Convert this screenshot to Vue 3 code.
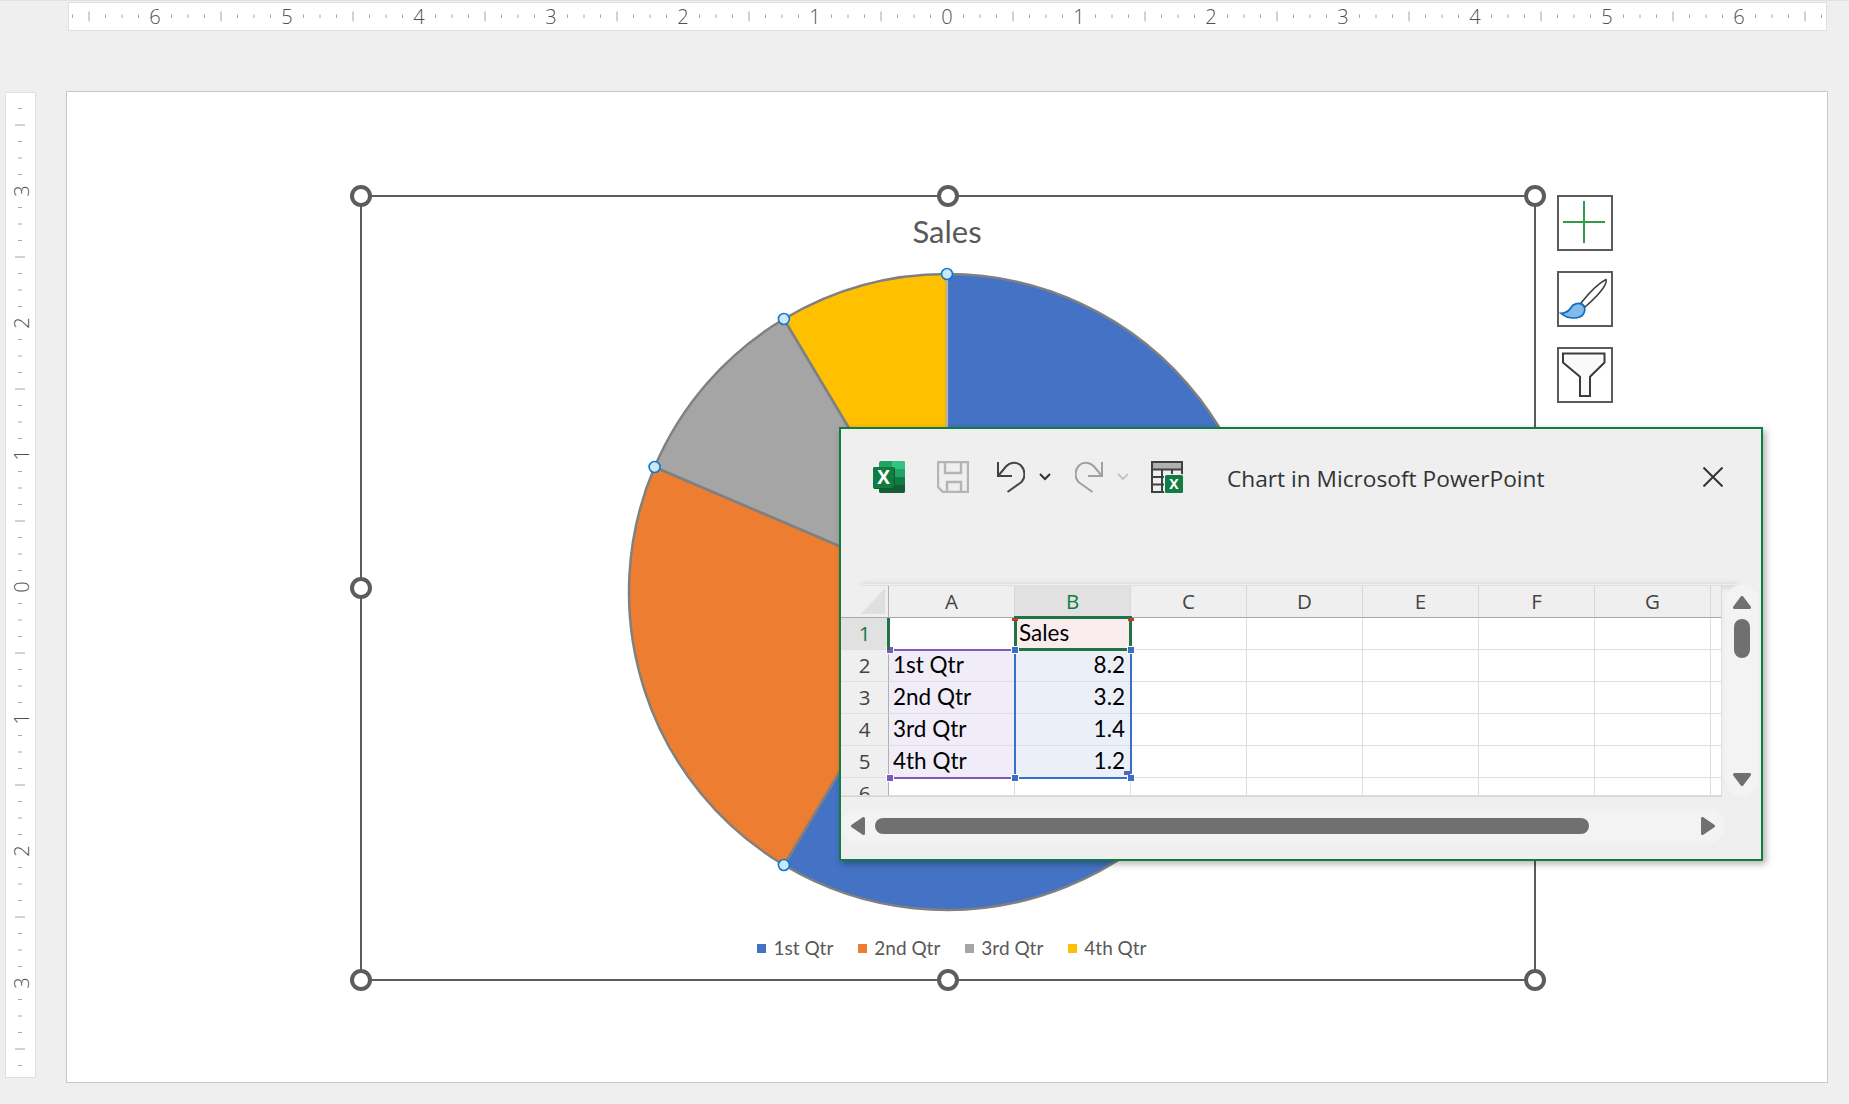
<template>
  <div class="app">
    <!-- Horizontal ruler -->
    <svg class="ruler-top" width="1759" height="29" viewBox="0 0 1759 29">
      <line
        v-for="t in ticks"
        :key="t.i"
        :x1="879 + t.i * 16.5"
        :x2="879 + t.i * 16.5"
        :y1="t.long ? 9.5 : 12.5"
        :y2="t.long ? 19.5 : 16"
      />
      <text v-for="n in numbers" :key="n.at" :x="879 + n.at" y="21.5" text-anchor="middle">{{ n.label }}</text>
    </svg>

    <div class="workspace">
      <!-- Vertical ruler -->
      <svg class="ruler-left" width="31" height="986" viewBox="0 0 31 986">
        <line
          v-for="t in vticks"
          :key="t.i"
          :y1="495 + t.i * 16.5"
          :y2="495 + t.i * 16.5"
          :x1="t.long ? 10 : 13"
          :x2="t.long ? 20 : 17"
        />
        <text
          v-for="n in vnumbers"
          :key="n.at"
          text-anchor="middle"
          :transform="`translate(24 ${495 + n.at}) rotate(-90)`"
        >{{ n.label }}</text>
      </svg>

      <div class="slide">
        <!-- Chart object -->
        <div class="chart">
          <div class="chart-title">Sales</div>
          <svg class="pie" width="640" height="640" viewBox="0 0 640 640">
            <path v-for="s in slices" :key="s.name" :d="s.d" :fill="s.color" />
            <line class="pie-seam" x1="320" y1="2" x2="320" y2="320" />
            <circle v-for="s in slices" :key="s.name + 'h'" :cx="s.hx" :cy="s.hy" r="5.5" class="pie-handle" />
          </svg>
          <div class="legend">
            <span v-for="s in slices" :key="s.name" class="legend-item">
              <i class="swatch" :style="{ background: s.color }"></i>{{ s.name }}
            </span>
          </div>

          <span
            v-for="h in handles"
            :key="h.id"
            class="handle"
            :class="h.id"
          ></span>
        </div>

        <!-- Chart side buttons -->
        <div class="side-buttons">
          <div class="side-btn">
            <svg width="52" height="52" viewBox="0 0 52 52">
              <path d="M4 25H46M25 4V46" stroke="#2f9e4a" stroke-width="2" fill="none" />
            </svg>
          </div>
          <div class="side-btn">
            <svg width="52" height="52" viewBox="0 0 52 52">
              <path d="M22 30C30 20 40 10 47 6.5C49 11 39 23 26 34Z" fill="#fff" stroke="#404040" stroke-width="1.6" />
              <path d="M2 40.3C7 40 10 38 12 34.5C14 31 19 29.5 22.5 31C26 33 26.5 37 24.5 41C21 46 10 47 2 40.3Z" fill="#83bbec" stroke="#0f6cbd" stroke-width="1.6" />
            </svg>
          </div>
          <div class="side-btn">
            <svg width="52" height="52" viewBox="0 0 52 52">
              <path d="M4 4.5H45.5V13.5L31 27.7V47H21V27.7L4 13.5Z" fill="#fafafa" stroke="#3c3c3c" stroke-width="2" />
            </svg>
          </div>
        </div>

        <!-- Embedded Excel window -->
        <div class="sheet-window">
          <div class="ribbon">
            <div class="titlebar">
              <svg class="ico-excel" width="32" height="32" viewBox="0 0 32 32">
                <rect x="6" width="26" height="32" rx="2" fill="#21a366" />
                <path d="M19 0H30a2 2 0 0 1 2 2V8H19Z" fill="#33c481" />
                <rect x="19" y="16" width="13" height="8" fill="#107c41" />
                <path d="M6 24H32V30a2 2 0 0 1-2 2H8a2 2 0 0 1-2-2Z" fill="#185c37" />
                <rect y="6" width="22" height="22" rx="2" fill="#0b5f33" />
                <rect y="6" width="21" height="21" rx="2" fill="#107c41" />
                <text x="10.5" y="23" text-anchor="middle" class="ico-x">X</text>
              </svg>
              <svg class="ico-save" width="32" height="32" viewBox="0 0 32 32" fill="none" stroke="#b4b4b4" stroke-width="2.4">
                <path d="M1 1H31V31H6L1 26Z" />
                <path d="M8 1V12H24V1M10 31V21H24V31" />
              </svg>
              <svg class="ico-undo" width="28" height="32" viewBox="0 0 28 32" fill="none" stroke="#444" stroke-width="2">
                <path d="M1 1V15H15" />
                <path d="M1.5 14.5L9 5.5C13 1 20 .5 24 4.5C28.5 9.5 28.5 16.5 24.5 21L10.5 31" />
              </svg>
              <svg class="ico-chev" width="12" height="8" viewBox="0 0 12 8" fill="none" stroke="#333" stroke-width="2">
                <path d="M1 1L6 6L11 1" />
              </svg>
              <svg class="ico-redo" width="28" height="32" viewBox="0 0 28 32" fill="none" stroke="#a0a0a0" stroke-width="2">
                <path d="M27 1V15H13" />
                <path d="M26.5 14.5L19 5.5C15 1 8 .5 4 4.5C-.5 9.5 -.5 16.5 3.5 21L17.5 31" />
              </svg>
              <svg class="ico-chev" width="12" height="8" viewBox="0 0 12 8" fill="none" stroke="#c4c4c4" stroke-width="2">
                <path d="M1 1L6 6L11 1" />
              </svg>
              <svg class="ico-table" width="32" height="32" viewBox="0 0 32 32">
                <rect x="1" y="1" width="30" height="30" fill="#efefef" stroke="#404040" stroke-width="2" />
                <rect x="2" y="2" width="28" height="6" fill="#b0b0b0" />
                <path d="M1 8.5H31M1 16H31M1 23.5H31M11 8V31M21 8V31" stroke="#404040" stroke-width="2" fill="none" />
                <rect x="13" y="13" width="19" height="19" rx="1" fill="#efefef" />
                <rect x="14" y="14" width="18" height="18" rx="1.5" fill="#107c41" />
                <text x="23" y="28" text-anchor="middle" class="ico-x-small">X</text>
              </svg>
              <span class="window-title">Chart in Microsoft PowerPoint</span>
              <svg class="ico-close" width="20" height="20" viewBox="0 0 20 20" fill="none" stroke="#333" stroke-width="2">
                <path d="M.5 .5L19.5 19.5M19.5 .5L.5 19.5" />
              </svg>
            </div>
          </div>

          <div class="sheet-row">
            <div class="sheet">
              <div class="cell head corner">
                <svg width="24" height="26" viewBox="0 0 24 26"><path d="M0 26L24 0V26Z" fill="#dfdfdf" /></svg>
              </div>
              <div
                v-for="c in columns"
                :key="c"
                class="cell head"
                :class="{ 'head-active': c === 'B' }"
              >{{ c }}</div>
              <div class="cell head-tail"></div>

              <template v-for="(row, r) in rows" :key="r">
                <div class="cell rowhead" :class="{ 'head-active': r === 0 }">{{ r + 1 }}</div>
                <div
                  v-for="(c, ci) in columns"
                  :key="c"
                  class="cell data"
                  :class="[
                    ci === 1 && row.value !== undefined ? 'num' : '',
                    ci === 0 && row.label ? 'tint-a' : '',
                    ci === 1 && row.value !== undefined && r > 0 ? 'tint-b' : '',
                    ci === 1 && r === 0 ? 'tint-sales' : ''
                  ]"
                >{{ ci === 0 ? row.label : ci === 1 ? row.value : '' }}</div>
                <div class="cell data"></div>
              </template>

              <!-- Formula range highlights -->
              <div class="range range-a"></div>
              <div class="range range-b"></div>
              <div class="range range-sales"></div>
              <i class="knob knob-blue" style="left: 171px; top: 61px"></i>
              <i class="knob knob-blue" style="left: 287px; top: 61px"></i>
              <i class="knob knob-blue" style="left: 171px; top: 189px"></i>
              <i class="knob knob-blue" style="left: 287px; top: 189px"></i>
              <i class="knob knob-purple" style="left: 46px; top: 61px"></i>
              <i class="knob knob-purple" style="left: 46px; top: 189px"></i>
              <i class="knob knob-red" style="left: 171px; top: 32px"></i>
              <i class="knob knob-red" style="left: 287px; top: 32px"></i>
              <i class="row1-mark"></i>
              <i class="fill-grip"></i>
            </div>

            <div class="vscroll">
              <svg width="18" height="13" viewBox="0 0 18 13"><path d="M9 1.5L16.5 11.5H1.5Z" class="arrow" /></svg>
              <div class="vthumb"></div>
              <svg class="arrow-end" width="18" height="13" viewBox="0 0 18 13"><path d="M9 11.5L16.5 1.5H1.5Z" class="arrow" /></svg>
            </div>
          </div>

          <div class="hscroll">
            <svg width="14" height="18" viewBox="0 0 14 18"><path d="M1.5 9L12.5 1.5V16.5Z" class="arrow" /></svg>
            <div class="hthumb"></div>
            <svg class="arrow-end" width="14" height="18" viewBox="0 0 14 18"><path d="M12.5 9L1.5 1.5V16.5Z" class="arrow" /></svg>
          </div>
        </div>
      </div>
    </div>
  </div>
</template>

<script setup>
const columns = ['A', 'B', 'C', 'D', 'E', 'F', 'G'];

const rows = [
  { label: '', value: 'Sales' },
  { label: '1st Qtr', value: '8.2' },
  { label: '2nd Qtr', value: '3.2' },
  { label: '3rd Qtr', value: '1.4' },
  { label: '4th Qtr', value: '1.2' },
  { label: '', value: undefined },
];

const handles = [
  { id: 'tl' }, { id: 'tm' }, { id: 'tr' },
  { id: 'ml' },
  { id: 'bl' }, { id: 'bm' }, { id: 'br' },
];

function makeTicks(limit) {
  const out = [];
  for (let i = -limit; i <= limit; i++) {
    if (i % 8 === 0) continue;
    out.push({ i, long: i % 4 === 0 });
  }
  return out;
}

function makeNumbers(max) {
  const out = [];
  for (let n = -max; n <= max; n++) out.push({ at: n * 132, label: Math.abs(n) });
  return out;
}

const ticks = makeTicks(53);
const numbers = makeNumbers(6);
const vticks = makeTicks(29);
const vnumbers = makeNumbers(3);

// pie starts at 12 o'clock; the last series runs back from the top
const pieData = [
  { name: '1st Qtr', value: 8.2, color: '#4472c4' },
  { name: '2nd Qtr', value: 3.2, color: '#ed7d31' },
  { name: '3rd Qtr', value: 1.4, color: '#a5a5a5' },
  { name: '4th Qtr', value: 1.2, color: '#ffc000' },
];
const total = pieData.reduce((a, b) => a + b.value, 0);
const R = 318;
const C = 320;

function point(turn, radius = R) {
  const a = turn * Math.PI * 2;
  return [C + Math.sin(a) * radius, C - Math.cos(a) * radius];
}

let acc = 0;
const slices = pieData.map((d) => {
  const from = acc / total;
  acc += d.value;
  const to = acc / total;
  const [x1, y1] = point(from);
  const [x2, y2] = point(to);
  const large = to - from > 0.5 ? 1 : 0;
  return {
    ...d,
    d: `M${C} ${C}L${x1} ${y1}A${R} ${R} 0 ${large} 1 ${x2} ${y2}Z`,
    hx: x2,
    hy: y2,
  };
});
</script>

<style>
html, body {
  margin: 0;
  background: #efefef;
}
</style>

<style scoped>
.app {
  width: 1849px;
  height: 1104px;
  overflow: hidden;
  background: #efefef;
  font-family: "Lato", "Liberation Sans", sans-serif;
  border-top: 1px solid #e2e2e2;
  box-sizing: border-box;
}

.ruler-top {
  display: block;
  margin: 1px 0 0 68px;
  background: #fff;
  outline: 1px solid #e0e0e0;
  outline-offset: -1px;
}
.ruler-top line,
.ruler-left line {
  stroke: #a6a6a6;
  stroke-width: 1;
}
.ruler-top text,
.ruler-left text {
  font-family: "Open Sans", sans-serif;
  font-weight: 300;
  font-size: 20px;
  fill: #505050;
}

.workspace {
  display: flex;
  align-items: flex-start;
  margin-top: 60px;
}
.ruler-left {
  display: block;
  flex: none;
  margin: 1px 0 0 5px;
  background: #fff;
  outline: 1px solid #e0e0e0;
  outline-offset: -1px;
}
.slide {
  position: relative;
  flex: none;
  width: 1762px;
  height: 992px;
  margin-left: 30px;
  background: #fff;
  border: 1px solid #c8c8c8;
  box-sizing: border-box;
}

.chart {
  position: absolute;
  left: 293px;
  top: 103px;
  width: 1176px;
  height: 786px;
  border: 2px solid #5c5c5c;
  box-sizing: border-box;
  display: flex;
  flex-direction: column;
  align-items: center;
}
.chart-title {
  margin-top: 19px;
  margin-right: 2px;
  font-size: 31px;
  line-height: 30px;
  color: #595959;
}
.pie {
  display: block;
  margin-top: 26px;
  margin-right: 2px;
  flex: none;
  overflow: visible;
}
.pie path {
  stroke: #808080;
  stroke-width: 2.5;
}
.pie-seam {
  stroke: #b4b4b4;
  stroke-width: 2;
}
.pie-handle {
  fill: #cfe6f7;
  stroke: #0a7cd0;
  stroke-width: 1.6;
}
.legend {
  display: flex;
  gap: 25px;
  margin-top: 26px;
  margin-left: 8px;
  font-size: 19px;
  line-height: 20px;
  color: #595959;
}
.legend-item {
  display: flex;
  align-items: center;
}
.swatch {
  width: 9px;
  height: 9px;
  margin-right: 7px;
}

.handle {
  position: absolute;
  width: 22px;
  height: 22px;
  border: 4px solid #5c5c5c;
  border-radius: 50%;
  background: #fff;
  box-sizing: border-box;
  transform: translate(-50%, -50%);
}
.tl { left: -1px; top: -1px; }
.tm { left: 50%; top: -1px; }
.tr { left: calc(100% + 1px); top: -1px; }
.ml { left: -1px; top: 50%; }
.bl { left: -1px; top: calc(100% + 1px); }
.bm { left: 50%; top: calc(100% + 1px); }
.br { left: calc(100% + 1px); top: calc(100% + 1px); }

.side-buttons {
  position: absolute;
  left: 1490px;
  top: 103px;
  display: flex;
  flex-direction: column;
  gap: 20px;
}
.side-btn {
  width: 56px;
  height: 56px;
  border: 2px solid #5c5c5c;
  box-sizing: border-box;
  background: #fff;
}
.side-btn svg {
  display: block;
}

.sheet-window {
  position: absolute;
  left: 772px;
  top: 335px;
  width: 924px;
  height: 434px;
  border: 2px solid #107c41;
  box-sizing: border-box;
  background: #efefef;
  box-shadow: 3px 3px 7px rgba(0, 0, 0, 0.3);
}

.ribbon {
  position: relative;
  height: 157px;
}
.ribbon::after {
  content: "";
  position: absolute;
  left: 20px;
  right: 24px;
  bottom: 1px;
  height: 1px;
  box-shadow: 0 1px 5px rgba(0, 0, 0, 0.45);
}
.titlebar {
  display: flex;
  align-items: center;
  height: 96px;
  padding: 0 38px 0 32px;
  box-sizing: border-box;
}
.titlebar svg {
  flex: none;
  display: block;
}
.ico-x {
  font-family: "Open Sans", sans-serif;
  font-weight: 700;
  font-size: 19px;
  fill: #fff;
}
.ico-x-small {
  font-family: "Open Sans", sans-serif;
  font-weight: 700;
  font-size: 14px;
  fill: #fff;
}
.ico-save { margin-left: 32px; }
.ico-undo { margin-left: 28px; }
.ico-chev { margin-left: 14px; }
.ico-redo { margin-left: 24px; }
.ico-table { margin-left: 22px; }
.window-title {
  margin-left: 44px;
  margin-top: 2px;
  font-family: "Open Sans", sans-serif;
  font-size: 22.7px;
  color: #333;
  white-space: nowrap;
}
.ico-close {
  margin-left: auto;
}

.sheet-row {
  display: flex;
  gap: 3px;
  margin-top: -1px;
  position: relative;
}
.sheet {
  position: relative;
  margin-top: 1px;
  display: grid;
  grid-template-columns: 48px 126px repeat(6, 116px) 11px;
  grid-template-rows: repeat(6, 32px) 18px;
  width: 881px;
  height: 210px;
  overflow: hidden;
  border-bottom: 1px solid #d6d6d6;
  box-sizing: content-box;
}
.cell {
  box-sizing: border-box;
  overflow: hidden;
  white-space: nowrap;
  line-height: 30px;
  min-width: 0;
}
.head,
.rowhead {
  font-family: "Open Sans", sans-serif;
  font-size: 20.5px;
  text-align: center;
  color: #444;
  background: #efefef;
}
.head {
  border-right: 1px solid #d8d8d8;
  border-bottom: 1px solid #a8a8a8;
}
.head-tail {
  background: #efefef;
  border-bottom: 1px solid #a8a8a8;
  border-right: 1px solid #d8d8d8;
}
.corner {
  display: flex;
  align-items: flex-end;
  justify-content: flex-end;
  padding: 0 3px 3px 0;
  border-right: 1px solid #b0b0b0;
}
.rowhead {
  border-right: 1px solid #b0b0b0;
  border-bottom: 1px solid #e0e0e0;
}
.head-active {
  background: #e1e1e1;
  color: #107c41;
}
.data {
  background: #fff;
  border-right: 1px solid #dedede;
  border-bottom: 1px solid #dedede;
  font-size: 22.5px;
  padding: 0 5px 0 4px;
  color: #000;
}
.num {
  text-align: right;
}
.tint-sales {
  background: #f9ecec;
  text-align: left;
}
.tint-a {
  background: #f1edf8;
}
.tint-b {
  background: #ebeff8;
}

.range {
  position: absolute;
  box-sizing: border-box;
}
.range-a {
  left: 48px;
  top: 63px;
  width: 127px;
  height: 130px;
  border-top: 2px solid #8057bf;
  border-bottom: 2px solid #8057bf;
}
.range-b {
  left: 173px;
  top: 63px;
  width: 118px;
  height: 130px;
  border: 2px solid #3a6fc7;
}
.range-sales {
  left: 173px;
  top: 30px;
  width: 118px;
  height: 35px;
  border: 3px solid #217346;
}
.knob {
  position: absolute;
  width: 6px;
  height: 6px;
  box-shadow: 0 0 0 1px #fff;
}
.knob-blue { background: #3a6fc7; }
.knob-purple { background: #8057bf; }
.knob-red { background: #c0392b; height: 3px; box-shadow: none; }
.row1-mark {
  position: absolute;
  left: 46px;
  top: 32px;
  width: 3px;
  height: 32px;
  background: #217346;
}
.fill-grip {
  position: absolute;
  left: 283px;
  top: 185px;
  width: 6px;
  height: 4px;
  background: #5a63b8;
}

.vscroll {
  flex: none;
  display: flex;
  flex-direction: column;
  align-items: center;
  gap: 10px;
  width: 34px;
  height: 211px;
  padding: 11px 0 10px;
  box-sizing: border-box;
  border-radius: 17px;
  background: #f3f3f3;
}
.vscroll svg,
.hscroll svg {
  display: block;
  flex: none;
}
.vthumb {
  width: 16px;
  height: 39px;
  border-radius: 8px;
  background: #707070;
}
.arrow {
  fill: #707070;
  stroke: #707070;
  stroke-width: 3;
  stroke-linejoin: round;
}
.arrow-end {
  margin-top: auto;
}

.hscroll {
  display: flex;
  align-items: center;
  gap: 10px;
  width: 884px;
  height: 34px;
  margin-top: 12px;
  padding: 0 10px;
  box-sizing: border-box;
  border-radius: 17px;
  background: #f3f3f3;
}
.hthumb {
  width: 714px;
  height: 16px;
  border-radius: 8px;
  background: #707070;
}
.hscroll .arrow-end {
  margin: 0 0 0 auto;
}
</style>
